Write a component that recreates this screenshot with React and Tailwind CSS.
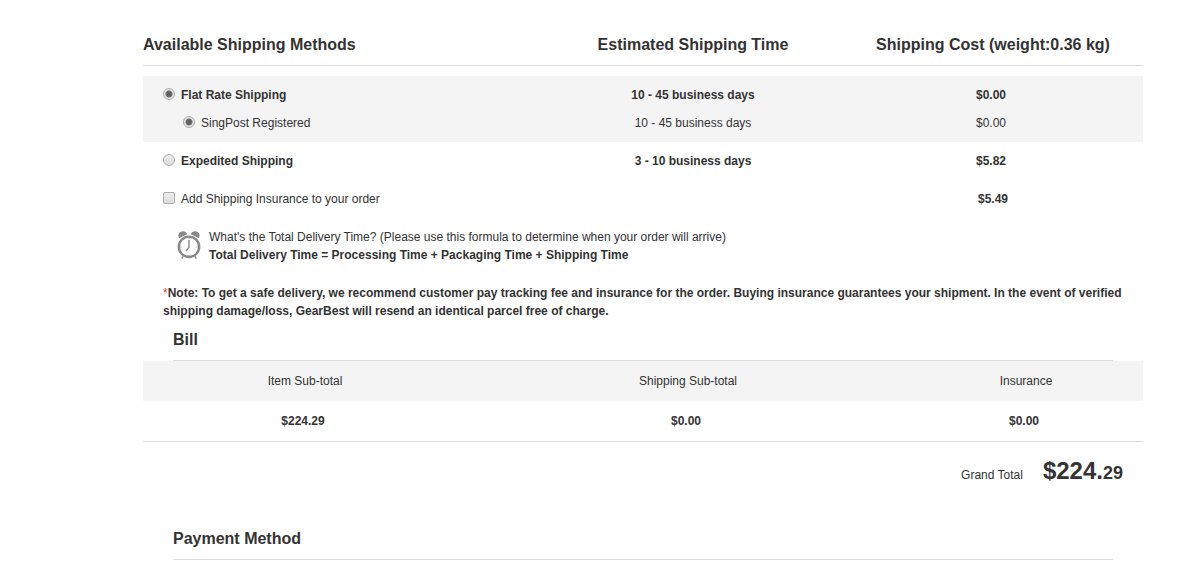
import { useState } from "react";
import { clsx } from "clsx";

const radioClass =
  "appearance-none shrink-0 size-3 mb-0.5 rounded-full border border-[#adadad] bg-linear-to-b from-[#ededed] to-[#dcdcdc] checked:bg-[radial-gradient(circle,#606060_0_2px,#707070_3px,#e6e6e6_4px)]";

const bill = [
  { label: "Item Sub-total", value: "$224.29" },
  { label: "Shipping Sub-total", value: "$0.00" },
  { label: "Insurance", value: "$0.00" },
];

const AlarmClock = () => (
  <svg
    className="w-6 h-7 shrink-0 mt-[3px]"
    viewBox="0 0 24 28"
    fill="none"
    stroke="#8a8a8a"
    aria-hidden="true"
  >
    {/* bells */}
    <path
      d="M2.2 7.2C.4 4.2 1.8.8 4.8.4 7.4 0 9.6 1 10.2 3.2zM21.8 7.2c1.8-3 .4-6.4-2.6-6.8-2.6-.4-4.8.6-5.4 2.8z"
      fill="#8a8a8a"
      stroke="none"
    />
    {/* feet */}
    <path d="M6 25l-1 2.8M18 25l1 2.8" strokeWidth="1.4" />
    <circle cx="12" cy="15.8" r="11.2" fill="#fff" stroke="none" />
    <circle cx="12" cy="15.8" r="10.2" strokeWidth="2.4" />
    <path d="M12 9v7.5l-3 3.5" strokeWidth="1.4" />
    <path d="M12 7.2v1M12 24v1M3.4 16h1M19.6 16h1" strokeWidth="1" />
  </svg>
);

const ShippingRow = ({ control, time, cost, bold, className }) => (
  <tr className={clsx(bold && "font-bold", className)}>
    <td className="pl-5">{control}</td>
    <td className="text-center">{time}</td>
    <td className="text-center pr-1">{cost}</td>
  </tr>
);

const ShippingMethods = () => {
  const [method, setMethod] = useState("flat");
  const [insurance, setInsurance] = useState(false);

  return (
    <table className="w-full table-fixed border-collapse leading-7">
      <colgroup>
        <col className="w-[40%]" />
        <col className="w-[30%]" />
        <col className="w-[30%]" />
      </colgroup>
      <thead>
        <tr className="border-b border-[#ddd] text-base leading-6">
          <th className="text-left pb-2">Available Shipping Methods</th>
          <th className="pb-2">Estimated Shipping Time</th>
          <th className="pb-2">Shipping Cost (weight:0.36 kg)</th>
        </tr>
      </thead>
      <tbody>
        <tr>
          <td colSpan={3} className="h-[10px]" />
        </tr>
      </tbody>
      <tbody className="bg-[#f4f4f4]">
        <ShippingRow
          bold
          className="[&>td]:pt-[5px]"
          control={
            <label className="flex items-center gap-1.5">
              <input
                type="radio"
                name="method"
                className={radioClass}
                checked={method === "flat"}
                onChange={() => setMethod("flat")}
              />
              Flat Rate Shipping
            </label>
          }
          time="10 - 45 business days"
          cost="$0.00"
        />
        <ShippingRow
          className="[&>td]:pb-[5px]"
          control={
            <label className="flex items-center gap-1.5 pl-5">
              <input
                type="radio"
                name="carrier"
                className={radioClass}
                defaultChecked
              />
              SingPost Registered
            </label>
          }
          time="10 - 45 business days"
          cost="$0.00"
        />
      </tbody>
      <tbody>
        <ShippingRow
          bold
          className="[&>td]:py-[5px]"
          control={
            <label className="flex items-center gap-1.5">
              <input
                type="radio"
                name="method"
                className={radioClass}
                checked={method === "expedited"}
                onChange={() => setMethod("expedited")}
              />
              Expedited Shipping
            </label>
          }
          time="3 - 10 business days"
          cost="$5.82"
        />
        <tr>
          <td className="pl-5 py-[5px]" colSpan={2}>
            <label className="flex items-center gap-1.5">
              <input
                type="checkbox"
                className="appearance-none shrink-0 size-3 mb-0.5 rounded-xs border border-[#adadad] bg-linear-to-b from-[#ededed] to-[#dcdcdc] checked:bg-none checked:bg-[#666]"
                checked={insurance}
                onChange={(e) => setInsurance(e.target.checked)}
              />
              Add Shipping Insurance to your order
            </label>
          </td>
          <td className="text-center font-bold">$5.49</td>
        </tr>
      </tbody>
    </table>
  );
};

const SectionTitle = ({ children }) => (
  <h2 className="mx-[30px] border-b border-[#ddd] pb-2 text-base leading-6 font-bold">
    {children}
  </h2>
);

export default function App() {
  return (
    <main className="bg-white pl-[143px] pr-[43px] pt-[33px] pb-2 text-xs text-[#333] font-['Liberation_Sans',Arial,sans-serif]">
      <ShippingMethods />

      <div className="flex items-start gap-2 pl-[34px] mt-[10px] leading-[18px]">
        <AlarmClock />
        <div>
          <p>
            What's the Total Delivery Time? (Please use this formula to
            determine when your order will arrive)
          </p>
          <p className="font-bold">
            Total Delivery Time = Processing Time + Packaging Time + Shipping
            Time
          </p>
        </div>
      </div>

      <p className="px-5 mt-5 mb-2 leading-[18px] font-bold">
        <span className="text-[#e4393c] font-normal">*</span>
        Note: To get a safe delivery, we recommend customer pay tracking fee
        and insurance for the order. Buying insurance guarantees your shipment.
        In the event of verified shipping damage/loss, GearBest will resend an
        identical parcel free of charge.
      </p>

      <SectionTitle>Bill</SectionTitle>
      <table className="w-full table-fixed border-collapse leading-10">
        <colgroup>
          <col className="w-[32.4%]" />
          <col className="w-[44.2%]" />
          <col className="w-[23.4%]" />
        </colgroup>
        <thead>
          <tr className="bg-[#f4f4f4]">
            {bill.map((item) => (
              <th key={item.label} className="font-normal">
                {item.label}
              </th>
            ))}
          </tr>
        </thead>
        <tbody>
          <tr className="border-b border-[#ddd] font-bold text-center">
            {bill.map((item) => (
              <td key={item.label} className="pr-1">
                {item.value}
              </td>
            ))}
          </tr>
        </tbody>
      </table>

      <div className="flex justify-end items-baseline gap-5 pr-5 mt-[11px] mb-[38px]">
        <span>Grand Total</span>
        <strong className="text-2xl leading-9">
          $224.<span className="text-lg">29</span>
        </strong>
      </div>

      <SectionTitle>Payment Method</SectionTitle>
    </main>
  );
}
